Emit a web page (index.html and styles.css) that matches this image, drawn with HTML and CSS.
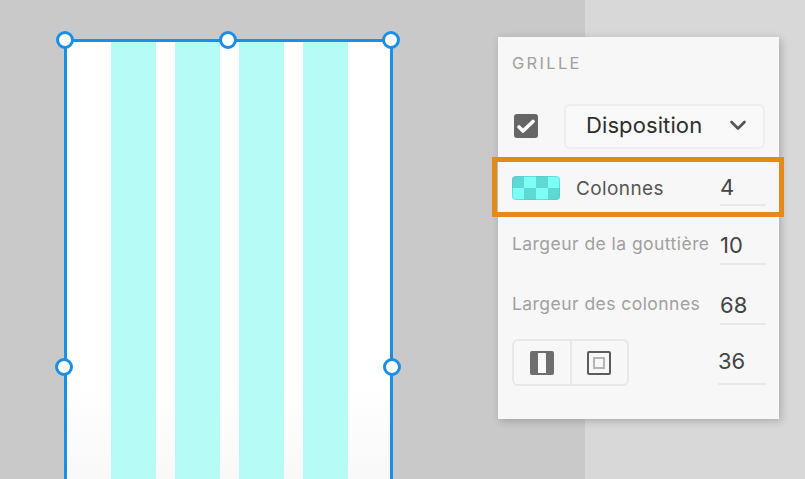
FILE: index.html
```html
<!DOCTYPE html>
<html lang="fr">
<head>
  <meta charset="UTF-8">
  <meta name="viewport" content="width=device-width, initial-scale=1.0">
  <title>Grille</title>
  <link rel="stylesheet" href="styles.css">
</head>
<body>
  <div class="workspace">
    <!-- Canvas with the selected artboard -->
    <div class="canvas">
      <div class="artboard">
        <div class="column"></div>
        <div class="column"></div>
        <div class="column"></div>
        <div class="column"></div>
        <span class="handle handle-top-left"></span>
        <span class="handle handle-top-mid"></span>
        <span class="handle handle-top-right"></span>
        <span class="handle handle-mid-left"></span>
        <span class="handle handle-mid-right"></span>
      </div>
    </div>
    <div class="sidebar"></div>

    <!-- Grid panel -->
    <div class="panel">
      <h3 class="panel-title">GRILLE</h3>

      <div class="row row-layout">
        <span class="checkbox">
          <svg width="24" height="24" viewBox="0 0 24 24" fill="none" stroke="#fff" stroke-width="3.6" stroke-linecap="round" stroke-linejoin="round">
            <path d="M5 13l4 4 10-9.500"></path>
          </svg>
        </span>
        <button class="select">
          <span>Disposition</span>
          <svg width="18" height="12" viewBox="0 0 18 12" fill="none" stroke="#555" stroke-width="2.600" stroke-linecap="round" stroke-linejoin="round">
            <path d="M2.500 3l6.500 6.500 6.500-6.500"></path>
          </svg>
        </button>
      </div>

      <div class="row row-highlight">
        <div class="swatch">
          <i></i><i></i><i></i><i></i><i></i><i></i><i></i><i></i>
        </div>
        <span class="label label-dark">Colonnes</span>
        <span class="field field-first">4</span>
        <div class="highlight"></div>
      </div>

      <div class="row row-gutter">
        <span class="label">Largeur de la gouttière</span>
        <span class="field">10</span>
      </div>

      <div class="row row-width">
        <span class="label">Largeur des colonnes</span>
        <span class="field">68</span>
      </div>

      <div class="row row-margin">
        <div class="segmented">
          <span class="segment">
            <svg width="24" height="24" viewBox="0 0 24 24">
              <rect width="24" height="24" rx="2" fill="#6e6e6e"></rect>
              <rect x="8" y="2" width="8" height="20" fill="#f9f9f9"></rect>
            </svg>
          </span>
          <span class="segment">
            <svg width="24" height="24" viewBox="0 0 24 24" fill="none">
              <rect x="1" y="1" width="22" height="22" rx="1" stroke="#5c5c5c" stroke-width="2"></rect>
              <rect x="7" y="7" width="10" height="10" stroke="#b5b5b5" stroke-width="2"></rect>
            </svg>
          </span>
        </div>
        <span class="field field-wide">36</span>
      </div>
    </div>
  </div>
</body>
</html>
```

FILE: styles.css
```css
:root {
  --canvas: #c9c9c9;
  --sidebar: #d8d8d8;
  --panel: #f7f7f7;
  --line: #e8e8e8;
  --blue: #1b8fe6;
  --teal: #b6fbf6;
  --orange: #e58a1a;
  --muted: #a0a0a0;
}

* {
  box-sizing: border-box;
}

html, body {
  height: 100%;
}

body {
  margin: 0;
  overflow: hidden;
  font-family: Inter, "Liberation Sans", sans-serif;
  background-color: var(--sidebar);
}

.workspace {
  position: relative;
  display: flex;
  height: 479px;
  overflow: hidden;
}

.canvas {
  flex: 0 0 585px;
  padding: 39px 0 0 64px;
  background-color: var(--canvas);
}

.sidebar {
  flex: 1;
  background-color: var(--sidebar);
}

/* Artboard */
.artboard {
  position: relative;
  display: flex;
  gap: 19px;
  width: 329px;
  height: 460px;
  padding-left: 44px;
  border: 3px solid var(--blue);
  background: linear-gradient(#fff 345px, #f8f8f8 440px);
}

.column {
  width: 45px;
  background-color: var(--teal);
}

.handle {
  position: absolute;
  width: 18px;
  height: 18px;
  border: 3px solid var(--blue);
  border-radius: 50%;
  background-color: #fff;
}

.handle-top-left {left: -11px; top: -11px;}
.handle-top-mid {left: 152px; top: -11px;}
.handle-top-right {left: 315px; top: -11px;}
.handle-mid-left {left: -12px; top: 316px;}
.handle-mid-right {left: 316px; top: 316px;}

/* Panel */
.panel {
  position: absolute;
  left: 498px;
  top: 37px;
  width: 281px;
  height: 382px;
  padding: 16px 13px 0 14px;
  background-color: var(--panel);
  box-shadow: 2px 2px 8px rgba(0, 0, 0, 0.22);
}

.panel-title {
  margin: 0;
  font-size: 16.5px;
  line-height: 20px;
  font-weight: 400;
  letter-spacing: 2.3px;
  color: var(--muted);
}

.row {
  display: flex;
  align-items: center;
}

.row-layout {
  margin-top: 31px;
  height: 44px;
}

.checkbox {
  display: block;
  width: 24px;
  height: 24px;
  margin: 0 26px 0 2px;
  border-radius: 3px;
  background-color: #666;
}

.checkbox svg {
  display: block;
}

.select {
  display: flex;
  align-items: center;
  justify-content: space-between;
  width: 201px;
  height: 45px;
  padding: 0 16px 2px 20px;
  border: 2px solid #eeeeee;
  border-radius: 6px;
  background-color: #f9f9f9;
  font-family: inherit;
  font-size: 22px;
  letter-spacing: 0.1px;
  color: #2e2e2e;
}

.row-highlight {
  position: relative;
  margin-top: 22px;
  height: 36px;
}

.highlight {
  position: absolute;
  left: -20px;
  right: -18px;
  top: -13px;
  height: 60px;
  border: 5px solid var(--orange);
}

.swatch {
  position: relative;
  display: grid;
  grid-template-columns: repeat(4, 12px);
  grid-auto-rows: 12px;
  width: 48px;
  height: 24px;
  margin-right: 16px;
  border-radius: 4px;
  overflow: hidden;
}

.swatch::after {
  content: "";
  position: absolute;
  inset: 0;
  border: 1px solid rgba(80, 200, 195, 0.6);
  border-radius: 4px;
}

.swatch i {background-color: #7dfff8;}
.swatch i:nth-child(1),
.swatch i:nth-child(3),
.swatch i:nth-child(6),
.swatch i:nth-child(8) {background-color: #5fd9d4;}

.label {
  flex: 1;
  padding-bottom: 8px;
  font-size: 17.5px;
  letter-spacing: 0.45px;
  white-space: nowrap;
  color: var(--muted);
}

.label-dark {
  padding-bottom: 0;
  font-size: 19px;
  letter-spacing: 0.4px;
  color: #555;
}

.field {
  width: 46px;
  height: 36px;
  border-bottom: 2px solid var(--line);
  font-size: 22px;
  line-height: 32px;
  color: #444;
}

.field-first {
  line-height: 34px;
}

.field-wide {
  width: 48px;
  height: 36px;
  margin-bottom: 1px;
  line-height: 24px;
}

.row-gutter {
  margin-top: 23px;
}

.row-width {
  margin-top: 24px;
}

.row-margin {
  margin-top: 14px;
  align-items: flex-end;
}

.segmented {
  display: flex;
  width: 117px;
  height: 47px;
  margin-right: auto;
  border: 2px solid var(--line);
  border-radius: 6px;
}

.segment {
  display: flex;
  flex: 1;
  align-items: center;
  justify-content: center;
}

.segment + .segment {
  border-left: 2px solid var(--line);
}
```
